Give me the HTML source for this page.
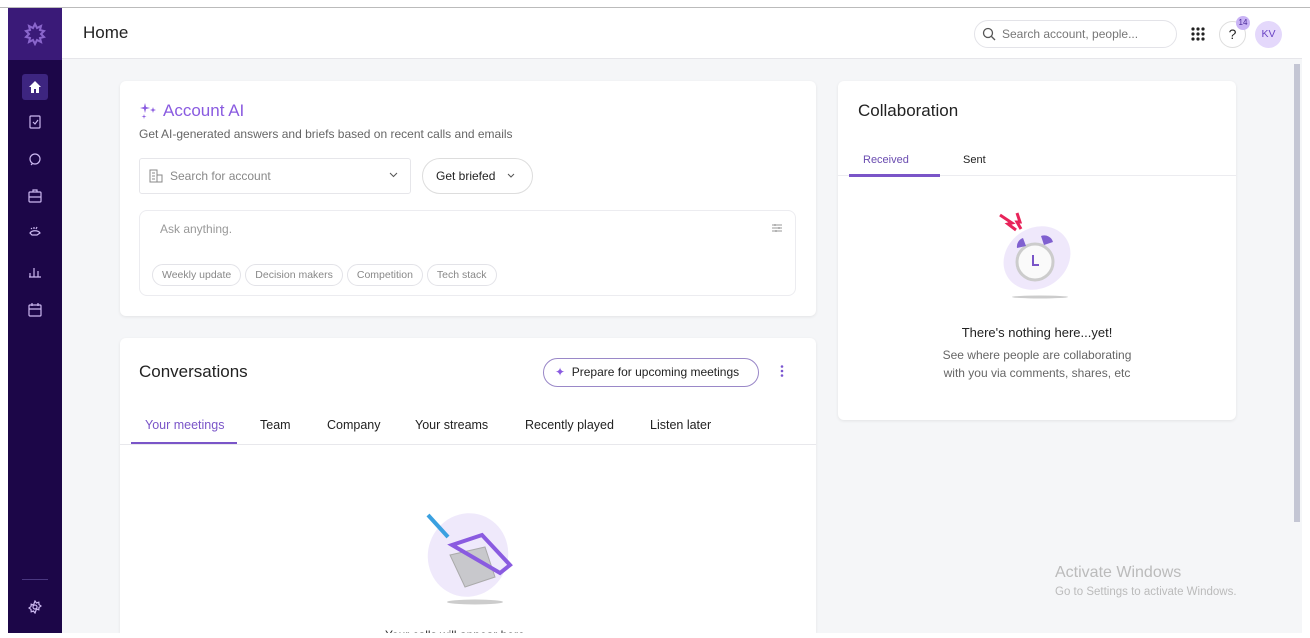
<!DOCTYPE html>
<html style="overflow:hidden;height:638px"><head><meta charset="utf-8"><style>
*{box-sizing:border-box;margin:0;padding:0}
body{width:1310px;height:638px;overflow:hidden;background:#fff;font-family:"Liberation Sans",sans-serif;position:relative;color:#222}
.abs{position:absolute}
.topline{left:0;top:7px;width:1310px;height:1px;background:#bbb}
.side{left:8px;top:8px;width:54px;height:625px;background:#1c0648}
.logo{left:8px;top:8px;width:54px;height:52px;background:#3a1a78}
.main{left:62px;top:59px;width:1240px;height:574px;background:#f5f6f8}
.header{left:62px;top:8px;width:1240px;height:51px;background:#fff;border-bottom:1px solid #e6e6ea}
.card{background:#fff;border-radius:6px;box-shadow:0 1px 3px rgba(0,0,0,.08)}
.pill{border:1px solid #e3e3e8;border-radius:14px;font-size:10.5px;color:#888;display:inline-block;padding:4px 9px;margin-right:4px}
.tab{font-size:12.5px;color:#222}
</style></head><body>
<div class="abs topline"></div>
<div class="abs side"></div>
<div class="abs logo"></div>
<svg class="abs" style="left:23px;top:22px" width="24" height="24" viewBox="0 0 24 24"><path d="M12 2l2 4 4-2-1 4 4 1-3 3 3 3-4 1 1 4-4-2-2 4-2-4-4 2 1-4-4-1 3-3-3-3 4-1-1-4 4 2z" fill="none" stroke="#8a66cc" stroke-width="2"/></svg>
<div class="abs" style="left:22px;top:74px;width:26px;height:26px;background:#3d2580;border-radius:3px"></div>
<svg class="abs" style="left:28px;top:80px" width="14" height="14" viewBox="0 0 14 14"><path d="M1 7L7 1l6 6h-2v6H8V9H6v4H3V7z" fill="#fff"/></svg>
<svg class="abs" style="left:27px;top:113px" width="16" height="210" viewBox="0 0 16 210" fill="none" stroke="#cbb8f0" stroke-width="1.2">
<rect x="3" y="3" width="10" height="12" rx="1"/><path d="M6 9l2 2 3-4"/>
<circle cx="8" cy="46" r="5"/><path d="M4 52l2-2"/>
<rect x="2" y="79" width="12" height="10" rx="1"/><path d="M6 79v-2h4v2M2 84h12"/>
<path d="M3 120c2-3 8-3 10 0l-3 2H5zM7 114v2M10 114l-1 2M4 115l1 1"/>
<path d="M3 164v-4M7 164v-9M11 164v-6M2 164h12"/>
<rect x="2" y="192" width="12" height="11" rx="1"/><path d="M2 196h12M5 190v3M11 190v3"/>
</svg>
<div class="abs" style="left:22px;top:579px;width:26px;height:1px;background:#4a3780"></div>
<svg class="abs" style="left:28px;top:600px" width="14" height="14" viewBox="0 0 14 14" fill="none" stroke="#cbb8f0" stroke-width="1.2"><circle cx="7" cy="7" r="2"/><path d="M7 1l1.5 2 2.3-.8.2 2.4 2 1.4-2 1.4-.2 2.4-2.3-.8L7 13l-1.5-2-2.3.8-.2-2.4-2-1.4 2-1.4.2-2.4 2.3.8z"/></svg>
<div class="abs main"></div>
<div class="abs header"></div>
<div class="abs" style="left:83px;top:23px;font-size:17px;color:#222">Home</div>
<div class="abs" style="left:974px;top:20px;width:203px;height:28px;border:1px solid #e3e3e8;border-radius:14px"></div>
<svg class="abs" style="left:982px;top:27px" width="14" height="14" viewBox="0 0 14 14" fill="none" stroke="#555" stroke-width="1.3"><circle cx="6" cy="6" r="4.5"/><path d="M9.5 9.5L13 13"/></svg>
<div class="abs" style="left:1002px;top:27px;font-size:12px;color:#777">Search account, people...</div>
<svg class="abs" style="left:1191px;top:27px" width="14" height="14" viewBox="0 0 14 14" fill="#222"><circle cx="2" cy="2" r="1.6"/><circle cx="7" cy="2" r="1.6"/><circle cx="12" cy="2" r="1.6"/><circle cx="2" cy="7" r="1.6"/><circle cx="7" cy="7" r="1.6"/><circle cx="12" cy="7" r="1.6"/><circle cx="2" cy="12" r="1.6"/><circle cx="7" cy="12" r="1.6"/><circle cx="12" cy="12" r="1.6"/></svg>
<div class="abs" style="left:1219px;top:21px;width:27px;height:27px;border:1px solid #ddd;border-radius:50%;text-align:center;line-height:25px;font-size:14px">?</div>
<div class="abs" style="left:1236px;top:16px;width:14px;height:14px;background:#c9b3f5;border-radius:50%;font-size:8px;color:#4a2a99;text-align:center;line-height:14px">14</div>
<div class="abs" style="left:1255px;top:21px;width:27px;height:27px;background:#e4d8fb;border-radius:50%;font-size:10.5px;color:#6a44c4;text-align:center;line-height:27px">KV</div>
<div class="abs" style="left:1294px;top:64px;width:6px;height:458px;background:#c4c6d4"></div>

<div class="abs card" style="left:120px;top:81px;width:696px;height:235px"></div>
<svg class="abs" style="left:140px;top:103px" width="18" height="16" viewBox="0 0 18 16" fill="#8a5be0"><path d="M5 0l1 4 4 1-4 1-1 4-1-4-4-1 4-1z"/><path d="M13 4l.7 2.3 2.3.7-2.3.7L13 10l-.7-2.3L10 7l2.3-.7z"/><path d="M4 11l.5 2 2 .5-2 .5L4 16l-.5-2-2-.5 2-.5z"/></svg>
<div class="abs" style="left:163px;top:101px;font-size:17px;color:#8a5be0">Account AI</div>
<div class="abs" style="left:139px;top:127px;font-size:12px;color:#666">Get AI-generated answers and briefs based on recent calls and emails</div>
<div class="abs" style="left:139px;top:158px;width:272px;height:36px;border:1px solid #e6e6ea;border-radius:3px"></div>
<svg class="abs" style="left:149px;top:169px" width="14" height="14" viewBox="0 0 14 14" fill="none" stroke="#888"><rect x="1" y="1" width="7" height="12"/><rect x="8" y="6" width="5" height="7"/><path d="M3 4h3M3 7h3M3 10h3"/></svg>
<div class="abs" style="left:170px;top:169px;font-size:12px;color:#888">Search for account</div>
<svg class="abs" style="left:389px;top:172px" width="9" height="6" viewBox="0 0 9 6" fill="none" stroke="#555"><path d="M1 1l3.5 3.5L8 1"/></svg>
<div class="abs" style="left:422px;top:158px;width:111px;height:36px;border:1px solid #ddd;border-radius:18px"></div>
<div class="abs" style="left:436px;top:169px;font-size:12px;color:#222">Get briefed</div>
<svg class="abs" style="left:507px;top:173px" width="8" height="5" viewBox="0 0 8 5" fill="none" stroke="#555"><path d="M1 1l3 3 3-3"/></svg>
<div class="abs" style="left:139px;top:210px;width:657px;height:86px;border:1px solid #ececf0;border-radius:8px"></div>
<div class="abs" style="left:160px;top:222px;font-size:12px;color:#999">Ask anything.</div>
<svg class="abs" style="left:771px;top:222px" width="12" height="12" viewBox="0 0 12 12" stroke="#999" fill="none"><path d="M1 3h10M1 6h10M1 9h10M4 2v2M8 5v2M5 8v2"/></svg>
<div class="abs" style="left:152px;top:264px;white-space:nowrap"><span class="pill">Weekly update</span><span class="pill">Decision makers</span><span class="pill">Competition</span><span class="pill">Tech stack</span></div>

<div class="abs card" style="left:120px;top:338px;width:696px;height:295px;border-radius:6px 6px 0 0"></div>
<div class="abs" style="left:139px;top:362px;font-size:17px;color:#222">Conversations</div>
<div class="abs" style="left:543px;top:358px;width:216px;height:29px;border:1px solid #9a88c8;border-radius:15px"></div>
<div class="abs" style="left:555px;top:365px;font-size:12px;color:#222"><span style="color:#8a5be0">&#10022;</span>&nbsp; Prepare for upcoming meetings</div>
<svg class="abs" style="left:780px;top:365px" width="4" height="12" viewBox="0 0 4 12" fill="#7a55d0"><circle cx="2" cy="1.5" r="1.3"/><circle cx="2" cy="6" r="1.3"/><circle cx="2" cy="10.5" r="1.3"/></svg>
<div class="abs tab" style="left:145px;top:418px;color:#7a55c8">Your meetings</div>
<div class="abs tab" style="left:260px;top:418px">Team</div>
<div class="abs tab" style="left:327px;top:418px">Company</div>
<div class="abs tab" style="left:415px;top:418px">Your streams</div>
<div class="abs tab" style="left:525px;top:418px">Recently played</div>
<div class="abs tab" style="left:650px;top:418px">Listen later</div>
<div class="abs" style="left:120px;top:444px;width:696px;height:1px;background:#e8e8ec"></div>
<div class="abs" style="left:131px;top:442px;width:106px;height:2px;background:#7a55c8"></div>
<svg class="abs" style="left:420px;top:510px" width="100" height="100" viewBox="0 0 100 100"><ellipse cx="48" cy="45" rx="40" ry="42" fill="#efe9fb" transform="rotate(20 48 45)"/><path d="M8 5l20 22" stroke="#3aa0e0" stroke-width="4"/><path d="M30 45l35-8 10 30-30 10z" fill="#c8c8cc" stroke="#aaa"/><path d="M32 35l30-10 28 30-10 8z" fill="none" stroke="#8a5be0" stroke-width="4"/><ellipse cx="55" cy="92" rx="28" ry="2.5" fill="#ccc"/></svg>
<div class="abs" style="left:385px;top:628px;font-size:12px;color:#333">Your calls will appear here</div>

<div class="abs card" style="left:838px;top:81px;width:398px;height:339px"></div>
<div class="abs" style="left:858px;top:101px;font-size:17px;color:#222">Collaboration</div>
<div class="abs" style="left:863px;top:154px;font-size:11px;color:#6a4cb0">Received</div>
<div class="abs" style="left:963px;top:154px;font-size:11px;color:#222">Sent</div>
<div class="abs" style="left:838px;top:175px;width:398px;height:1px;background:#ececf0"></div>
<div class="abs" style="left:849px;top:174px;width:91px;height:3px;background:#7a55c8"></div>
<svg class="abs" style="left:995px;top:210px" width="85" height="92" viewBox="0 0 85 92"><ellipse cx="42" cy="48" rx="35" ry="30" fill="#efe8fb" transform="rotate(-35 42 48)"/><path d="M5 5l12 8-4 1 8 6M22 3l3 9-3 0 4 7" stroke="#e8245a" stroke-width="3" fill="none"/><circle cx="40" cy="52" r="18" fill="#fafafa" stroke="#ccc" stroke-width="3"/><path d="M22 38a9 9 0 0 1 6-10l3 8z M46 26a9 9 0 0 1 12 6l-9 3z" fill="#8060d0"/><path d="M38 45v10h6" stroke="#7a55c8" stroke-width="2" fill="none"/><ellipse cx="45" cy="87" rx="28" ry="1.5" fill="#ccc"/></svg>
<div class="abs" style="left:838px;top:325px;width:398px;text-align:center;font-size:13px;color:#222">There's nothing here...yet!</div>
<div class="abs" style="left:838px;top:346px;width:398px;text-align:center;font-size:12px;color:#666;line-height:18px">See where people are collaborating<br>with you via comments, shares, etc</div>

<div class="abs" style="left:1055px;top:564px;font-size:16px;color:#bbb">Activate Windows</div>
<div class="abs" style="left:1055px;top:586px;font-size:11.5px;color:#bbb">Go to Settings to activate Windows.</div>
<div class="abs" style="left:0;top:633px;width:1310px;height:20px;background:#fff"></div>
</body></html>
